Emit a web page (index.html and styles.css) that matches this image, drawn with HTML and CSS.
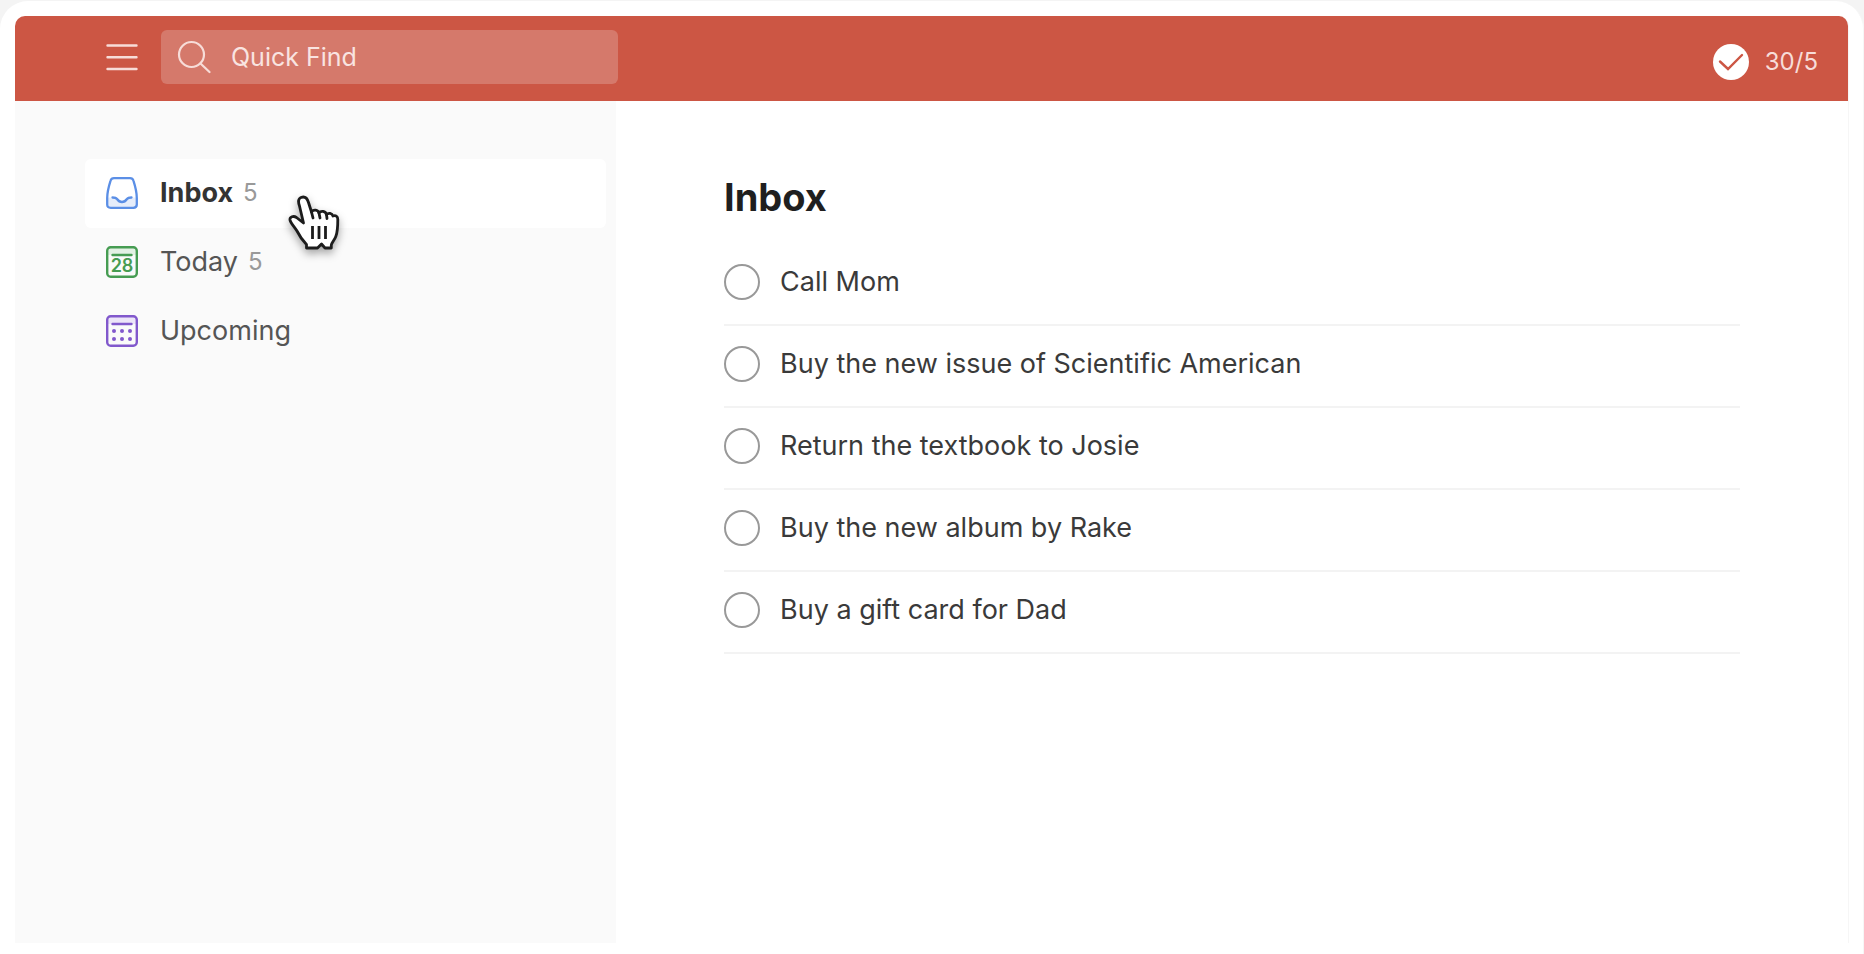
FILE: index.html
```html
<!DOCTYPE html>
<html lang="en">
<head>
<meta charset="utf-8">
<title>Inbox</title>
<link rel="stylesheet" href="styles.css">
</head>
<body>
<div class="frame">
  <div class="app">
    <header class="topbar">
      <button class="menu" type="button" aria-label="Toggle menu">
        <svg width="32" height="28" viewBox="0 0 32 28" fill="none" stroke="currentColor" stroke-width="2.4" stroke-linecap="round"><path d="M1.5 2.5h29M1.5 14.200h29M1.500 26h29"/></svg>
      </button>
      <label class="search">
        <svg width="34" height="34" viewBox="0 0 34 34" fill="none" stroke="currentColor" stroke-width="2.200" stroke-linecap="round"><circle cx="14.500" cy="14.500" r="12.500"/><path d="M23.500 23.500l9 8.500"/></svg>
        <input type="text" placeholder="Quick Find" aria-label="Quick Find">
      </label>
      <button class="karma" type="button">
        <svg width="36" height="36" viewBox="0 0 36 36" fill="none"><circle cx="18" cy="18" r="18" fill="#fff"/><path d="M7 17.500l8 7.500L29 11" stroke="#cc5644" stroke-width="2.400" stroke-linecap="round"/></svg>
        <span>30/5</span>
      </button>
    </header>
    <div class="body">
      <nav class="sidebar">
        <a class="nav-item selected" href="#inbox">
          <svg class="nav-icon" viewBox="0 0 32 32" fill="none" stroke="#5b8fe6" stroke-width="2.300"><path d="M1.500 20.500H7c3 0 3 4.500 9 4.500s6-4.500 9-4.500h5.500v7a3 3 0 0 1-3 3h-23a3 3 0 0 1-3-3z" fill="#e6edfa" stroke="none"/><path d="M8 1.200h16c2 0 3 .9 3.500 2.600C29.500 10 30.800 16 30.800 21v6.500c0 2.300-1.200 3.300-3.500 3.300H4.700c-2.300 0-3.500-1-3.500-3.300V21C1.200 16 2.500 10 4.500 3.800 5 2.100 6 1.200 8 1.200z"/><path d="M6.500 20.500c2.500 0 3.500 0 4.500 1.500s2.500 3 5 3 4-1.500 5-3 2-1.500 4.500-1.500" stroke-linecap="round"/></svg>
          <span>Inbox</span><span class="count">5</span>
        </a>
        <a class="nav-item" href="#today">
          <svg class="nav-icon" viewBox="0 0 32 32" fill="none" stroke="#469c52" stroke-width="2.400"><path d="M2 2h28v7H2z" fill="#e3f1e4" stroke="none"/><rect x="1.200" y="1.200" width="29.600" height="29.600" rx="3.500"/><path d="M6.500 9h19" stroke-linecap="round"/><text class="day" x="16" y="26" text-anchor="middle">28</text></svg>
          <span>Today</span><span class="count">5</span>
        </a>
        <a class="nav-item" href="#upcoming">
          <svg class="nav-icon" viewBox="0 0 32 32" fill="none" stroke="#8158cc" stroke-width="2.400"><path d="M2 2h28v7H2z" fill="#ece5f8" stroke="none"/><rect x="1.200" y="1.200" width="29.600" height="29.600" rx="3.500"/><path d="M6.500 9h19" stroke-linecap="round"/><g fill="#8158cc" stroke="none"><circle cx="8" cy="16" r="2"/><circle cx="16" cy="16" r="2"/><circle cx="24" cy="16" r="2"/><circle cx="8" cy="24" r="2"/><circle cx="16" cy="24" r="2"/><circle cx="24" cy="24" r="2"/></g></svg>
          <span>Upcoming</span>
        </a>
      </nav>
      <main class="content">
        <h1>Inbox</h1>
        <ul class="tasks">
          <li><label><input type="checkbox"><span>Call Mom</span></label></li>
          <li><label><input type="checkbox"><span>Buy the new issue of Scientific American</span></label></li>
          <li><label><input type="checkbox"><span>Return the textbook to Josie</span></label></li>
          <li><label><input type="checkbox"><span>Buy the new album by Rake</span></label></li>
          <li><label><input type="checkbox"><span>Buy a gift card for Dad</span></label></li>
        </ul>
      </main>
    </div>
  </div>
</div>
<svg class="pointer" width="52" height="56" viewBox="0 0 52 56" fill="none" stroke="#1c1c1c" stroke-width="2.800" stroke-linejoin="round" stroke-linecap="round"><path d="M18.500 53V49.500C14 45 12 42 9 36 6 31 2.500 28 2 25c-.4-3.200 3.500-4.500 6.500-2.500L15.500 28 11.500 11C10 7 10 3.500 13.500 2.300c3.500-1 5.800 1.200 7 5.200L23.500 17c2-2.800 6.500-2.300 7.500 1 2-2.600 6.500-2 7.500 1.500 2-2 5.500-1.500 6.500 1.500 2.500-1 4.800 0 4.800 3.500 0 6 0 12-2 17-1.500 4-4 6-4.500 8.500V53H37l-3.500-4-4 4z" fill="#fff"/><path d="M23.500 17l1.500 6M31 18l1 5M38.500 19.500l.5 4"/><path d="M24.500 31v13M31 31v13M37.500 31v13" stroke-linecap="butt"/></svg>
</body>
</html>
```
FILE: styles.css
```css
* { box-sizing: border-box; }

body {
  margin: 0;
  min-height: 100vh;
  display: flex;
  background: #f4f4f4;
  font-family: Inter, "Liberation Sans", sans-serif;
  font-size: 27px;
  line-height: 32px;
  color: #3a3a3a;
}

.frame {
  flex: 1;
  display: flex;
  margin-top: 1px;
  padding: 15px 14px 11px 15px;
  background: #fff;
  border-right: 1px solid #f6f6f6;
  border-radius: 28px 28px 0 0;
}

.app {
  flex: 1;
  display: flex;
  flex-direction: column;
  border-right: 1px solid #f6f6f6;
  border-radius: 10px 10px 0 0;
  overflow: hidden;
}

button {
  border: 0;
  padding: 0;
  background: none;
  font: inherit;
  color: inherit;
}

button svg { display: block; }

.topbar {
  display: flex;
  align-items: center;
  height: 85px;
  padding: 0 30px 0 91px;
  background: #cc5644;
  color: #f7dcd8;
}

.menu {
  margin: 0 23px 4px 0;
}

.search {
  display: flex;
  align-items: center;
  gap: 20px;
  width: 457px;
  height: 54px;
  margin-bottom: 4px;
  padding: 0 16px;
  border-radius: 6px;
  background: #d5796b;
}

.search input {
  flex: 1;
  min-width: 0;
  padding: 0;
  border: 0;
  outline: 0;
  background: none;
  font: inherit;
  font-size: 25px;
  color: #f9e4e1;
}

.search input::placeholder {
  color: #f9e4e1;
  opacity: 1;
}

.karma {
  display: flex;
  align-items: center;
  gap: 16px;
  margin: 6px 0 0 auto;
  font-size: 24px;
}

.body {
  flex: 1;
  display: flex;
}

.sidebar {
  width: 601px;
  padding: 58px 10px 0 70px;
  background: #fafafa;
}

.nav-item {
  display: flex;
  align-items: center;
  height: 69px;
  padding: 0 21px 2px;
  border-radius: 6px;
  color: #555;
  text-decoration: none;
}

.nav-item.selected {
  background: #fff;
  color: #333;
  font-weight: 700;
}

.nav-icon {
  width: 32px;
  height: 32px;
  margin-right: 22px;
}

.day {
  font-size: 18px;
  font-weight: 600;
  fill: #469c52;
  stroke: none;
}

.count {
  margin-left: 10px;
  font-size: 24px;
  font-weight: 400;
  color: #999;
}

.content {
  flex: 1;
  padding: 72px 108px 0;
}

h1 {
  margin: 0 0 23px;
  font-size: 38px;
  line-height: 48px;
  color: #1f1f1f;
}

.tasks {
  margin: 0;
  padding: 0;
  list-style: none;
}

.tasks li {
  border-bottom: 2px solid #f3f3f3;
}

.tasks label {
  display: flex;
  align-items: center;
  gap: 20px;
  height: 80px;
  padding-bottom: 5px;
}

.tasks input {
  appearance: none;
  width: 36px;
  height: 36px;
  margin: 0;
  border: 2px solid #999;
  border-radius: 50%;
}

.pointer {
  position: absolute;
  left: 288px;
  top: 195px;
  filter: drop-shadow(0 4px 4px rgba(0, 0, 0, 0.35));
}
```
